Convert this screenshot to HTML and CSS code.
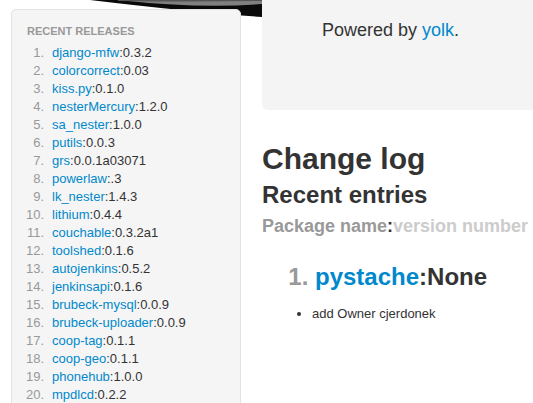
FILE: index.html
```html
<!DOCTYPE html>
<html>
<head>
<meta charset="utf-8">
<link rel="stylesheet" href="styles.css">
</head>
<body>
<svg class="deco" width="262" height="20" viewBox="0 0 262 20">
  <path d="M90 0 Q 190 12 262 17 L262 0 Z" fill="#0a0a0a"/>
  <path d="M118 0 Q 200 9 262 4 L262 0 Z" fill="#808080"/>
  <path d="M118 0 L262 0 L262 1 Q 190 2 118 1 Z" fill="#555"/>
</svg>
<div class="page">
  <aside class="well">
    <div class="nav-header">Recent releases</div>
    <ol class="releases">
      <li><a href="#">django-mfw</a>:0.3.2</li>
      <li><a href="#">colorcorrect</a>:0.03</li>
      <li><a href="#">kiss.py</a>:0.1.0</li>
      <li><a href="#">nesterMercury</a>:1.2.0</li>
      <li><a href="#">sa_nester</a>:1.0.0</li>
      <li><a href="#">putils</a>:0.0.3</li>
      <li><a href="#">grs</a>:0.0.1a03071</li>
      <li><a href="#">powerlaw</a>:.3</li>
      <li><a href="#">lk_nester</a>:1.4.3</li>
      <li><a href="#">lithium</a>:0.4.4</li>
      <li><a href="#">couchable</a>:0.3.2a1</li>
      <li><a href="#">toolshed</a>:0.1.6</li>
      <li><a href="#">autojenkins</a>:0.5.2</li>
      <li><a href="#">jenkinsapi</a>:0.1.6</li>
      <li><a href="#">brubeck-mysql</a>:0.0.9</li>
      <li><a href="#">brubeck-uploader</a>:0.0.9</li>
      <li><a href="#">coop-tag</a>:0.1.1</li>
      <li><a href="#">coop-geo</a>:0.1.1</li>
      <li><a href="#">phonehub</a>:1.0.0</li>
      <li><a href="#">mpdlcd</a>:0.2.2</li>
    </ol>
  </aside>
  <main class="content">
    <div class="hero">
      <p>Powered by <a href="#">yolk</a>.</p>
    </div>
    <h1>Change log</h1>
    <h2 class="sub">Recent entries</h2>
    <h3 class="legend"><span class="pkg">Package name</span>:<span class="ver">version number</span></h3>
    <ol class="entries">
      <li><h2 class="entry"><a href="#">pystache</a>:None</h2></li>
    </ol>
    <ul class="changes">
      <li>add Owner cjerdonek</li>
    </ul>
  </main>
</div>
</body>
</html>
```

FILE: styles.css
```css
html, body {
  margin: 0;
  padding: 0;
  background: #fff;
  overflow: hidden;
}
body {
  font-family: "Liberation Sans", Arial, sans-serif;
  font-size: 13px;
  line-height: 18px;
  color: #333;
  position: relative;
  height: 403px;
}
a {
  color: #0088cc;
  text-decoration: none;
}
.deco {
  position: absolute;
  left: 0;
  top: 0;
}
.page {
  position: relative;
  display: flex;
  align-items: flex-start;
  gap: 21px;
  padding-left: 11px;
}
.well {
  flex: 0 0 230px;
  box-sizing: border-box;
  margin-top: 9px;
  background: #f5f5f5;
  border: 1px solid #e3e3e3;
  border-radius: 5px;
  padding: 12px 0 40px 0;
}
.nav-header {
  font-size: 11px;
  font-weight: bold;
  line-height: 18px;
  color: #999;
  text-transform: uppercase;
  padding-left: 15px;
  margin-bottom: 4px;
}
.releases {
  list-style: none;
  margin: 0;
  padding: 0 0 0 7px;
  counter-reset: item;
}
.releases li {
  counter-increment: item;
  white-space: nowrap;
}
.releases li::before {
  content: counter(item) ".";
  display: inline-block;
  width: 25px;
  text-align: right;
  margin-right: 8px;
  color: #999;
}
.content {
  flex: 0 0 300px;
}
.hero {
  background: #f4f4f4;
  border-radius: 0 0 0 6px;
  height: 110px;
  box-sizing: border-box;
  padding: 15px 0 0 60px;
  margin-bottom: 31px;
}
.hero p {
  margin: 0;
  font-size: 18px;
  line-height: 30px;
}
h1 {
  margin: 0;
  font-size: 30px;
  line-height: 36px;
  font-weight: bold;
  color: #333;
}
.sub {
  margin: 0;
  font-size: 24px;
  line-height: 36px;
  color: #333;
}
.legend {
  margin: 0;
  font-size: 18px;
  line-height: 27px;
  color: #333;
}
.legend .pkg { color: #999; }
.legend .ver { color: #ccc; }
.entries {
  margin: 19px 0 0 0;
  padding-left: 53px;
  font-size: 24px;
  font-weight: bold;
  color: #999;
}
.entry {
  margin: 0;
  font-size: 24px;
  line-height: 36px;
  color: #333;
}
.changes {
  margin: 10px 0 0 0;
  padding-left: 50px;
}
```
